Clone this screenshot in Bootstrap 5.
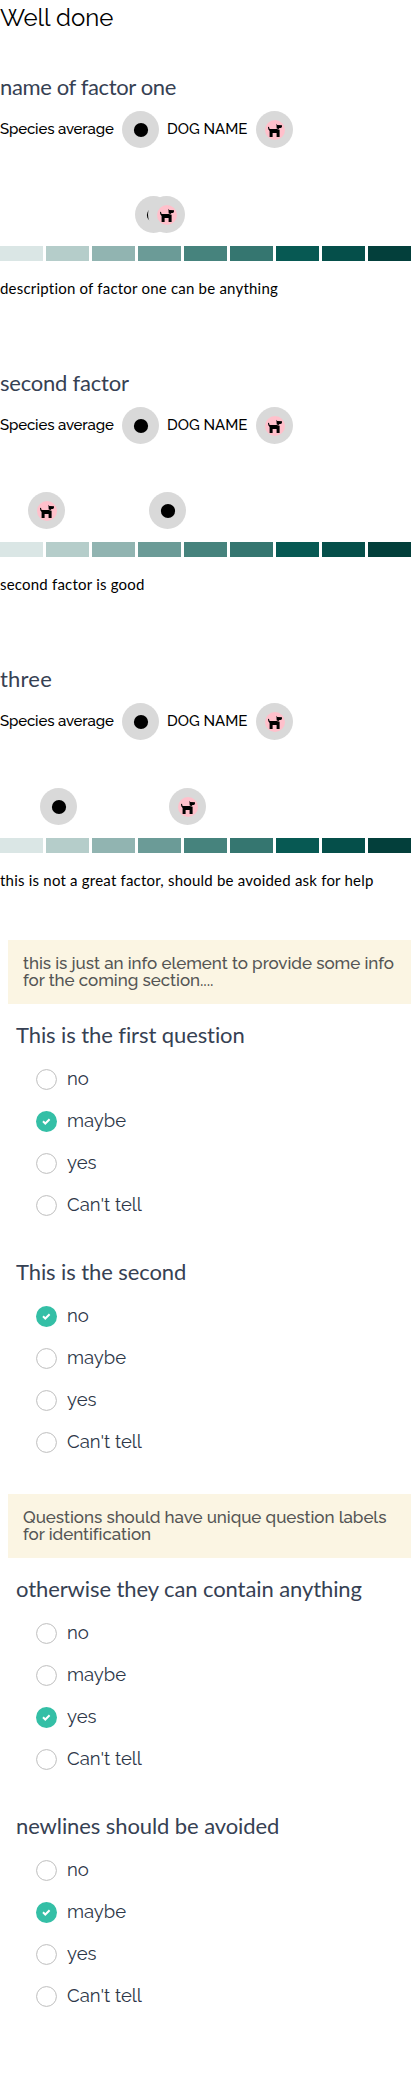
<!DOCTYPE html>
<html lang="en">
<head>
<meta charset="utf-8">
<meta name="viewport" content="width=device-width, initial-scale=1">
<title>Well done</title>
<link href="https://cdn.jsdelivr.net/npm/bootstrap@5.3.0/dist/css/bootstrap.min.css" rel="stylesheet">
<style>
  body { font-family: Raleway, Lato, sans-serif; color: #000; background: #fff; overflow-x: hidden; }
  .page-title { height: 52px; font-size: 24px; line-height: 35px; font-weight: 400; }
  .factor { height: 296px; padding-top: 20px; }
  .factor-name, .question-title { font-family: Lato, sans-serif; font-size: 22px; line-height: 30px; font-weight: 400; color: #364153; }
  .factor-name { height: 39px; letter-spacing: -.22px; }
  .factor:nth-of-type(1) .factor-name { letter-spacing: -.37px; }
  .factor:nth-of-type(3) .factor-name { letter-spacing: .2px; }
  .legend-row { height: 37px; font-size: 15px; font-weight: 500; column-gap: 8px; }
  .legend-row .avg-label { width: 114px; letter-spacing: -.14px; }
  .legend-row .dog-label { width: 81px; }
  .marker { width: 37px; height: 37px; display: block; flex: none; }
  .track { height: 37px; margin-top: 48px; }
  .track .marker { top: 0; }
  .scale { height: 15px; margin-top: 13px; display: grid; grid-template-columns: repeat(9, 1fr); column-gap: 3px; }
  .scale i:nth-child(1) { background: #dae6e5; }
  .scale i:nth-child(2) { background: #b5cdca; }
  .scale i:nth-child(3) { background: #91b4b1; }
  .scale i:nth-child(4) { background: #6b9b97; }
  .scale i:nth-child(5) { background: #46837d; }
  .scale i:nth-child(6) { background: #357670; }
  .scale i:nth-child(7) { background: #075953; }
  .scale i:nth-child(8) { background: #054f4a; }
  .scale i:nth-child(9) { background: #033f3b; }
  .factor-text { font-family: Lato, sans-serif; font-size: 15px; line-height: 22px; letter-spacing: .21px; margin: 16px 0 0; white-space: nowrap; }
  .info-box { height: 64px; margin: 0 0 16px 8px; padding: 15px 0 0 15px; background: #fbf5e3; color: #555; font-size: 17px; line-height: 17px; font-weight: 500; letter-spacing: -.055px; white-space: nowrap; }
  .question { height: 237px; padding-left: 16px; }
  .question-title { height: 38px; margin: 0; letter-spacing: -.09px; }
  .choice { height: 42px; padding-left: 20px; column-gap: 10px; font-size: 18.5px; line-height: 24px; color: #2d3748; }
  .choice svg { width: 21px; height: 21px; flex: none; }
</style>
<script src="https://cdn.jsdelivr.net/npm/bootstrap@5.3.0/dist/js/bootstrap.bundle.min.js"></script>
</head>
<body>
<svg class="d-none" xmlns="http://www.w3.org/2000/svg">
  <symbol id="avg" viewBox="0 0 37 37"><circle cx="18.5" cy="18.5" r="18.5" fill="#d9d9d9"/><circle cx="19" cy="19" r="7.1"/></symbol>
  <symbol id="dog" viewBox="0 0 37 37"><circle cx="18.5" cy="18.5" r="18.5" fill="#d9d9d9"/><circle cx="19" cy="19" r="10" fill="#ffc0cb"/><path d="M20.4 12.8l.9 1.1 4.7.3-.1 2-1.3.8-1.1.1-.9 1-1.9-.6z"/><path d="M12 16l1-.2.4 1.9.9.3h6.5l2.8.8V26h-3v-4h-4v4h-3v-6l-1.3-1.8z"/></symbol>
  <symbol id="off" viewBox="0 0 21 21"><circle cx="10.5" cy="10.5" r="9.9" fill="#fff" stroke="#bdbdbd" stroke-width="1"/></symbol>
  <symbol id="on" viewBox="0 0 21 21"><circle cx="10.5" cy="10.5" r="10.5" fill="#34bfa6"/><path d="M7 10.2l2.3 2.3 4.3-4.2" fill="none" stroke="#fff" stroke-width="2"/></symbol>
</svg>
<main>
  <h1 class="page-title m-0">Well done</h1>

  <section class="factor">
    <h2 class="factor-name m-0">name of factor one</h2>
    <div class="legend-row d-flex align-items-center text-nowrap"><span class="avg-label">Species average</span><svg class="marker"><use href="#avg"/></svg><span class="dog-label">DOG NAME</span><svg class="marker"><use href="#dog"/></svg></div>
    <div class="track position-relative"><svg class="marker position-absolute" style="left:135px"><use href="#avg"/></svg><svg class="marker position-absolute" style="left:148px"><use href="#dog"/></svg></div>
    <div class="scale"><i></i><i></i><i></i><i></i><i></i><i></i><i></i><i></i><i></i></div>
    <p class="factor-text">description of factor one can be anything</p>
  </section>
  <section class="factor">
    <h2 class="factor-name m-0">second factor</h2>
    <div class="legend-row d-flex align-items-center text-nowrap"><span class="avg-label">Species average</span><svg class="marker"><use href="#avg"/></svg><span class="dog-label">DOG NAME</span><svg class="marker"><use href="#dog"/></svg></div>
    <div class="track position-relative"><svg class="marker position-absolute" style="left:149px"><use href="#avg"/></svg><svg class="marker position-absolute" style="left:28px"><use href="#dog"/></svg></div>
    <div class="scale"><i></i><i></i><i></i><i></i><i></i><i></i><i></i><i></i><i></i></div>
    <p class="factor-text">second factor is good</p>
  </section>
  <section class="factor">
    <h2 class="factor-name m-0">three</h2>
    <div class="legend-row d-flex align-items-center text-nowrap"><span class="avg-label">Species average</span><svg class="marker"><use href="#avg"/></svg><span class="dog-label">DOG NAME</span><svg class="marker"><use href="#dog"/></svg></div>
    <div class="track position-relative"><svg class="marker position-absolute" style="left:40px"><use href="#avg"/></svg><svg class="marker position-absolute" style="left:169px"><use href="#dog"/></svg></div>
    <div class="scale"><i></i><i></i><i></i><i></i><i></i><i></i><i></i><i></i><i></i></div>
    <p class="factor-text">this is not a great factor, should be avoided ask for help</p>
  </section>

  <div class="info-box">this is just an info element to provide some info<br>for the coming section....</div>
  <section class="question">
    <h2 class="question-title">This is the first question</h2>
    <div class="choice d-flex align-items-center"><svg><use href="#off"/></svg><span>no</span></div>
    <div class="choice d-flex align-items-center"><svg><use href="#on"/></svg><span>maybe</span></div>
    <div class="choice d-flex align-items-center"><svg><use href="#off"/></svg><span>yes</span></div>
    <div class="choice d-flex align-items-center"><svg><use href="#off"/></svg><span>Can't tell</span></div>
  </section>
  <section class="question">
    <h2 class="question-title">This is the second</h2>
    <div class="choice d-flex align-items-center"><svg><use href="#on"/></svg><span>no</span></div>
    <div class="choice d-flex align-items-center"><svg><use href="#off"/></svg><span>maybe</span></div>
    <div class="choice d-flex align-items-center"><svg><use href="#off"/></svg><span>yes</span></div>
    <div class="choice d-flex align-items-center"><svg><use href="#off"/></svg><span>Can't tell</span></div>
  </section>

  <div class="info-box">Questions should have unique question labels<br>for identification</div>
  <section class="question">
    <h2 class="question-title">otherwise they can contain anything</h2>
    <div class="choice d-flex align-items-center"><svg><use href="#off"/></svg><span>no</span></div>
    <div class="choice d-flex align-items-center"><svg><use href="#off"/></svg><span>maybe</span></div>
    <div class="choice d-flex align-items-center"><svg><use href="#on"/></svg><span>yes</span></div>
    <div class="choice d-flex align-items-center"><svg><use href="#off"/></svg><span>Can't tell</span></div>
  </section>
  <section class="question">
    <h2 class="question-title">newlines should be avoided</h2>
    <div class="choice d-flex align-items-center"><svg><use href="#off"/></svg><span>no</span></div>
    <div class="choice d-flex align-items-center"><svg><use href="#on"/></svg><span>maybe</span></div>
    <div class="choice d-flex align-items-center"><svg><use href="#off"/></svg><span>yes</span></div>
    <div class="choice d-flex align-items-center"><svg><use href="#off"/></svg><span>Can't tell</span></div>
  </section>
</main>
</body>
</html>
